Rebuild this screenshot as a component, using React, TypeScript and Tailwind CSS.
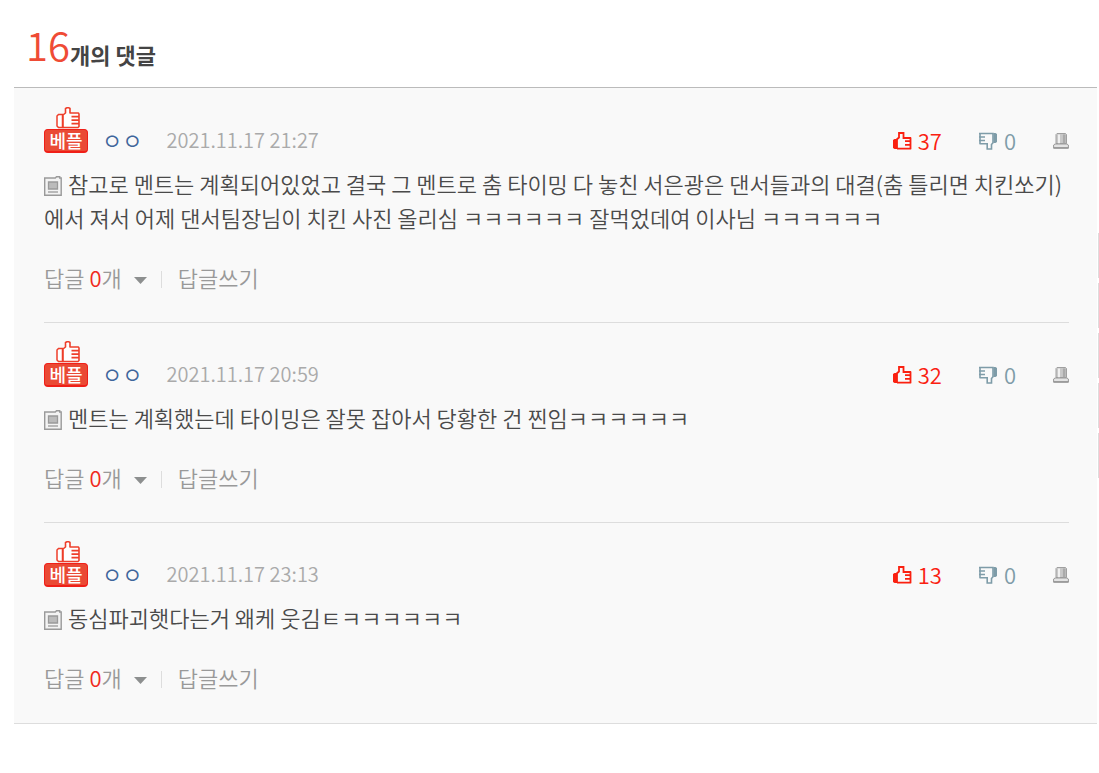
type Comment = {
  id: number;
  author: string;
  date: string;
  text: string;
  up: number;
  down: number;
  replies: number;
};

const comments: Comment[] = [
  {
    id: 1,
    author: "ㅇㅇ",
    date: "2021.11.17 21:27",
    text: "참고로 멘트는 계획되어있었고 결국 그 멘트로 춤 타이밍 다 놓친 서은광은 댄서들과의 대결(춤 틀리면 치킨쏘기)에서 져서 어제 댄서팀장님이 치킨 사진 올리심 ㅋㅋㅋㅋㅋㅋ 잘먹었데여 이사님 ㅋㅋㅋㅋㅋㅋ",
    up: 37,
    down: 0,
    replies: 0,
  },
  {
    id: 2,
    author: "ㅇㅇ",
    date: "2021.11.17 20:59",
    text: "멘트는 계획했는데 타이밍은 잘못 잡아서 당황한 건 찐임ㅋㅋㅋㅋㅋㅋ",
    up: 32,
    down: 0,
    replies: 0,
  },
  {
    id: 3,
    author: "ㅇㅇ",
    date: "2021.11.17 23:13",
    text: "동심파괴햇다는거 왜케 웃김ㅌㅋㅋㅋㅋㅋㅋ",
    up: 13,
    down: 0,
    replies: 0,
  },
];

function BestBadge() {
  return (
    <span className="flex h-[46px] w-11 flex-col items-center">
      <svg aria-hidden="true" className="ml-1 h-[22px] w-6" viewBox="0 0 24 22" fill="none" stroke="#ee3f2b">
        <path d="M1 9 2.500 7.500h4V20.500h-4L1 19Z" fill="#fff" strokeWidth="1.500" />
        <path
          d="M7 20.500V8L9.500 6V1.500L11 .8h2l1 .7V6h8.500L23 7v12.500l-1 1Z"
          fill="#fff"
          strokeWidth="1.600"
          strokeLinejoin="round"
        />
        <path d="M15.500 9.700H23M15.500 13.200H23M15.500 16.700H23" strokeWidth="1.700" />
      </svg>
      <span className="flex h-6 w-11 items-center justify-center rounded-sm border border-b-2 border-[#f01f18] bg-[#ea4a35] pb-0.5 text-lg leading-5 font-medium text-white">
        베플
      </span>
    </span>
  );
}

function ThumbUp() {
  return (
    <svg aria-hidden="true" className="h-[18px] w-[19px]" viewBox="0 0 19 18" fill="none" stroke="#fa2010">
      <path d="M0 8 1.500 7H4V17H1.500L0 16Z" fill="#fa2010" stroke="none" />
      <path d="M4 16.700V7.200L6 5.500V1h4.500v5H18" strokeWidth="1.800" />
      <path d="M17.500 5.500v11.700M12 9.200h6M12 12.800h6M4 16.700h14" strokeWidth="1.800" />
    </svg>
  );
}

function ThumbDown() {
  return (
    <svg aria-hidden="true" className="h-[18px] w-[18px]" viewBox="0 0 18 18" fill="none" stroke="#7e9ca8">
      <path d="M14.500 1h2L18 2v8l-1.500 1h-2Z" fill="#7e9ca8" stroke="none" />
      <path d="M0 1.500h14v9.300L12.500 12.500V17H8.200v-5.200H.5M0 5h6M0 8.500h6M1 1v11" strokeWidth="1.600" />
    </svg>
  );
}

function Siren() {
  return (
    <svg aria-hidden="true" className="h-4 w-4" viewBox="0 0 16 16">
      <path d="M3 10.500V1.500l1-1h8.500l1 1v9Z" fill="#c8c8c8" stroke="#a0a0a0" />
      <path d="M6 1.500v9" stroke="#f4f4f4" strokeWidth="1.800" />
      <path d="M11.200 1.500v9" stroke="#aaa" strokeWidth="2.500" />
      <path d="M2 11h12l1.400 1v3.200H.6V12Z" fill="#e4e4e4" stroke="#999" />
      <path d="M.6 14.800h14.800" stroke="#999" strokeWidth="1.500" />
    </svg>
  );
}

function DeviceIcon() {
  return (
    <svg
      aria-hidden="true"
      className="mr-1.5 inline-block h-5 w-[18px] align-[-3px]"
      viewBox="0 0 18 20"
      fill="none"
      stroke="#9a9a9a"
    >
      <path d="M.7 2h10.600L12.500.8h3.200V2h1.500v17.300H.7Z" fill="#f3f3f3" strokeWidth="1.400" />
      <path d="M4.500 6h9v7h-9Z" fill="#bbb" strokeWidth="1.300" />
      <path d="M4 16h10" strokeWidth="1.300" />
    </svg>
  );
}

function CommentItem({ comment }: { comment: Comment }) {
  return (
    <li className="border-b border-[#ddd] pt-[18px] pb-7 last:border-b-0">
      <div className="flex h-[46px] items-end">
        <BestBadge />
        <span className="ml-3.5 text-[22px] leading-7 text-[#3f669c]">{comment.author}</span>
        <time className="ml-6 text-xl leading-[26px] text-[#aaa]">{comment.date}</time>
        <div className="ml-auto flex items-center gap-[37px] text-[22px] leading-[22px]">
          <button type="button" aria-label="추천" className="flex items-center gap-1.5 text-[#fa2010]">
            <ThumbUp />
            <span className="pb-0.5">{comment.up}</span>
          </button>
          <button type="button" aria-label="반대" className="flex items-center gap-[7px] text-[#7e9ca8]">
            <ThumbDown />
            <span className="pb-0.5">{comment.down}</span>
          </button>
          <button type="button" aria-label="신고">
            <Siren />
          </button>
        </div>
      </div>
      <p className="mt-[13px] text-[22px] leading-[34px] break-all text-[#4a4a4a]">
        <DeviceIcon />
        {comment.text}
      </p>
      <div className="mt-[26px] flex items-center text-[22px] leading-[34px] text-[#999]">
        <button type="button" className="flex items-center">
          <span>
            답글 <span className="text-[#f02a20]">{comment.replies}</span>개
          </span>
          <svg aria-hidden="true" className="mt-1.5 ml-3 h-[7px] w-[13px]" viewBox="0 0 13 7">
            <path d="M0 0h13L6.500 7Z" fill="#8d8f8f" />
          </svg>
        </button>
        <span className="mt-1 ml-3.5 h-[17px] w-px bg-[#ddd]" />
        <button type="button" className="ml-4">
          답글쓰기
        </button>
      </div>
    </li>
  );
}

export default function App() {
  return (
    <main className="relative min-h-screen bg-white pr-0.5 pl-3.5 font-['Noto_Sans_CJK_KR',sans-serif] font-[350]">
      <h1 className="flex h-[87px] items-end pb-[17px] pl-3 text-[22px] leading-8 font-bold text-[#444]">
        <span className="mb-1.5 text-[40px] leading-10 font-[350] text-[#ef4b35]">16</span>
        개의 댓글
      </h1>
      <ul className="border-t border-b border-t-[#bbb] border-b-[#ddd] bg-[#f9f9f9] py-px pr-7 pl-[30px]">
        {comments.map((comment) => (
          <CommentItem key={comment.id} comment={comment} />
        ))}
      </ul>
      <div aria-hidden="true" className="absolute top-[233px] right-0 flex flex-col gap-[5px]">
        <span className="h-[45px] w-px bg-[#ddd]" />
        <span className="h-[45px] w-px bg-[#ddd]" />
        <span className="h-[45px] w-px bg-[#ddd]" />
        <span className="h-[45px] w-px bg-[#ddd]" />
        <span className="h-[45px] w-px bg-[#ddd]" />
      </div>
    </main>
  );
}
